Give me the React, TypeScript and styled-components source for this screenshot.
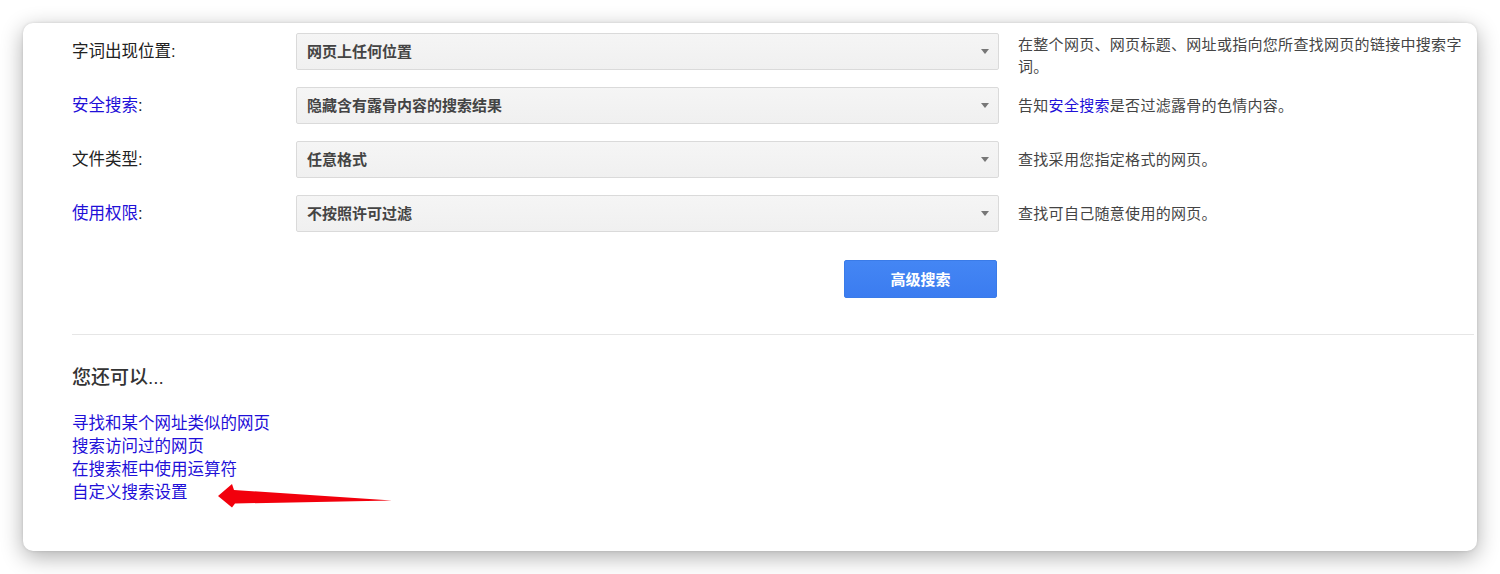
import { Fragment } from "react";
import styled, { createGlobalStyle } from "styled-components";

const GlobalStyle = createGlobalStyle`
  html, body {
    margin: 0;
    padding: 0;
    background: #ffffff;
  }
  body {
    font-family: "Liberation Sans", Arial, "Noto Sans CJK SC", sans-serif;
  }
`;

const Page = styled.div`
  padding: 23px;
`;

const Card = styled.div`
  position: relative;
  width: 1454px;
  height: 528px;
  box-sizing: border-box;
  padding: 10px 3px 0 49px;
  background: #ffffff;
  border-radius: 10px;
  box-shadow: 0 6px 22px rgba(0, 0, 0, 0.32), 0 0 3px rgba(0, 0, 0, 0.12);
  overflow: hidden;
`;

const Form = styled.div`
  display: grid;
  grid-template-columns: 224px 703px 1fr;
  grid-auto-rows: 37px;
  row-gap: 17px;
  align-items: start;
`;

const Label = styled.div`
  font-size: 16.5px;
  line-height: 37px;
  color: #222;
`;

const Link = styled.a`
  color: #1f10d8;
  text-decoration: none;
  cursor: pointer;
`;

const Select = styled.div`
  height: 37px;
  box-sizing: border-box;
  display: flex;
  align-items: center;
  justify-content: space-between;
  padding: 0 9px 2px 10px;
  background: linear-gradient(#f5f5f5, #f0f0f0);
  border: 1px solid #dadada;
  border-radius: 2px;
  font-size: 15px;
  font-weight: bold;
  color: #444;
`;

const Caret = styled.span`
  width: 0;
  height: 0;
  margin-top: 2px;
  border-left: 4.5px solid transparent;
  border-right: 4.5px solid transparent;
  border-top: 5px solid #777;
`;

const Desc = styled.div<{ $wrap?: boolean }>`
  margin-left: 19px;
  width: 450px;
  padding-top: ${(p) => (p.$wrap ? "1px" : "8px")};
  font-size: 15px;
  line-height: 22px;
  letter-spacing: 0.3px;
  color: #444;
`;

const ButtonRow = styled.div`
  display: grid;
  grid-template-columns: 224px 703px;
  margin-top: 28px;
`;

const SearchButton = styled.button`
  grid-column: 2;
  justify-self: end;
  margin-right: 2px;
  width: 153px;
  height: 38px;
  padding: 0 0 2px;
  border: 1px solid #3a7be8;
  border-radius: 2px;
  background: linear-gradient(#4486f4, #3b7cf0);
  color: #fff;
  font-family: inherit;
  font-size: 15px;
  font-weight: bold;
  cursor: pointer;
`;

const Divider = styled.hr`
  margin: 36px 0 0;
  border: 0;
  border-top: 1px solid #e6e6e6;
`;

const Heading = styled.h2`
  margin: 30px 0 0;
  font-size: 19px;
  line-height: 26px;
  font-weight: 500;
  color: #333;
`;

const LinkList = styled.div`
  display: flex;
  flex-direction: column;
  align-items: flex-start;
  margin-top: 21px;
  font-size: 16.5px;
  line-height: 23px;
`;

const Annotation = styled.svg`
  position: absolute;
  left: 0;
  top: 0;
  width: 100%;
  height: 100%;
  pointer-events: none;
`;

const rows = [
  {
    label: <>字词出现位置:</>,
    value: "网页上任何位置",
    desc: <>在整个网页、网页标题、网址或指向您所查找网页的链接中搜索字词。</>,
    wrap: true,
  },
  {
    label: (
      <>
        <Link>安全搜索</Link>:
      </>
    ),
    value: "隐藏含有露骨内容的搜索结果",
    desc: (
      <>
        告知<Link>安全搜索</Link>是否过滤露骨的色情内容。
      </>
    ),
  },
  {
    label: <>文件类型:</>,
    value: "任意格式",
    desc: <>查找采用您指定格式的网页。</>,
  },
  {
    label: (
      <>
        <Link>使用权限</Link>:
      </>
    ),
    value: "不按照许可过滤",
    desc: <>查找可自己随意使用的网页。</>,
  },
];

const links = [
  "寻找和某个网址类似的网页",
  "搜索访问过的网页",
  "在搜索框中使用运算符",
  "自定义搜索设置",
];

export default function App() {
  return (
    <>
      <GlobalStyle />
      <Page>
        <Card>
          <Form>
            {rows.map((r) => (
              <Fragment key={r.value}>
                <Label>{r.label}</Label>
                <Select>
                  <span>{r.value}</span>
                  <Caret />
                </Select>
                <Desc $wrap={r.wrap}>{r.desc}</Desc>
              </Fragment>
            ))}
          </Form>
          <ButtonRow>
            <SearchButton>高级搜索</SearchButton>
          </ButtonRow>
          <Divider />
          <Heading>您还可以...</Heading>
          <LinkList>
            {links.map((t) => (
              <Link key={t}>{t}</Link>
            ))}
          </LinkList>
          <Annotation viewBox="0 0 1454 528">
            <polygon
              points="195,473 209,461 211,467 369,477.5 212,480.5 209,484.5"
              fill="#f2000c"
            />
          </Annotation>
        </Card>
      </Page>
    </>
  );
}
